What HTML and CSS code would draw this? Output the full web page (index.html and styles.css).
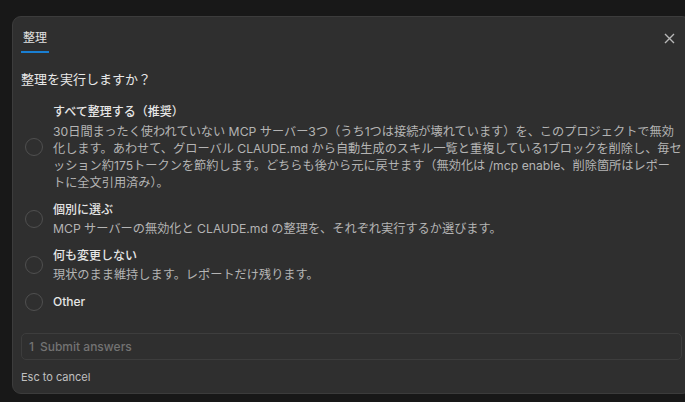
FILE: index.html
```html
<!DOCTYPE html>
<html lang="ja">
<head>
<meta charset="utf-8">
<link rel="stylesheet" href="styles.css">
</head>
<body>
<div class="panel">
  <div class="header">
    <div class="tab">整理</div>
    <button class="close" aria-label="close">
      <svg width="11" height="11" viewBox="0 0 11 11"><path d="M1 1L10 10M10 1L1 10" stroke="#b8b8b8" stroke-width="1.4" fill="none"/></svg>
    </button>
  </div>
  <div class="question">整理を実行しますか？</div>
  <div class="options">
    <div class="option">
      <span class="radio"></span>
      <div class="otext">
        <div class="otitle">すべて整理する（推奨）</div>
        <div class="odesc first">30日間まったく使われていない MCP サーバー3つ（うち1つは接続が壊れています）を、このプロジェクトで無効化します。あわせて、グローバル CLAUDE.md から自動生成のスキル一覧と重複している1ブロックを削除し、毎セッション約175トークンを節約します。どちらも後から元に戻せます（無効化は /mcp enable、削除箇所はレポートに全文引用済み）。</div>
      </div>
    </div>
    <div class="option">
      <span class="radio"></span>
      <div class="otext">
        <div class="otitle">個別に選ぶ</div>
        <div class="odesc">MCP サーバーの無効化と CLAUDE.md の整理を、それぞれ実行するか選びます。</div>
      </div>
    </div>
    <div class="option">
      <span class="radio"></span>
      <div class="otext">
        <div class="otitle">何も変更しない</div>
        <div class="odesc">現状のまま維持します。レポートだけ残ります。</div>
      </div>
    </div>
    <div class="option">
      <span class="radio"></span>
      <div class="otext">
        <div class="otitle">Other</div>
      </div>
    </div>
  </div>
  <div class="submit"><span class="num">1</span><span class="stext">Submit answers</span></div>
  <div class="esc">Esc to cancel</div>
</div>
</body>
</html>
```

FILE: styles.css
```css
html, body {
  margin: 0;
  padding: 0;
  background: #181818;
  overflow: hidden;
  width: 685px;
  height: 402px;
}
body {
  font-family: "Inter", "Noto Sans CJK JP", sans-serif;
  color: #e6e6e6;
}
.panel {
  box-sizing: border-box;
  margin: 16px 0 0 12px;
  width: 679px;
  height: 378px;
  background: #2f2f2f;
  border: 1px solid #3c3c3c;
  border-radius: 9px;
  padding: 0 8px;
}
.header {
  display: flex;
  justify-content: space-between;
  align-items: flex-start;
}
.tab {
  padding: 12px 2px 5px;
  font-size: 12px;
  line-height: 17px;
  color: #e2e2e2;
  border-bottom: 2px solid #1a7fd3;
}
.close {
  background: none;
  border: none;
  padding: 0;
  margin: 16px 7px 0 0;
  width: 11px;
  height: 11px;
  display: flex;
}
.question {
  margin-top: 17px;
  font-size: 13px;
  line-height: 18px;
  color: #e8e8e8;
}
.options {
  margin-top: 15px;
  display: flex;
  flex-direction: column;
  gap: 10px;
}
.option {
  display: flex;
  align-items: center;
}
.radio {
  flex: none;
  box-sizing: border-box;
  width: 18px;
  height: 18px;
  margin-left: 4px;
  margin-right: 10px;
  border: 1.3px solid #4f4f4f;
  border-radius: 50%;
}
.otext {
  flex: 1;
  min-width: 0;
}
.otitle {
  font-size: 12px;
  line-height: 18px;
  font-weight: 500;
  color: #e6e6e6;
}
.odesc {
  margin-top: 1px;
  font-size: 12.2px;
  line-height: 17px;
  color: #b4b4b4;
}
.odesc.first {
  margin-top: 2px;
}
.submit {
  margin-top: 22px;
  box-sizing: border-box;
  height: 27px;
  border: 1px solid #3d3d3d;
  border-radius: 5px;
  display: flex;
  align-items: center;
  padding-left: 7px;
  gap: 6px;
  font-size: 12px;
  font-weight: 500;
  color: #737373;
}
.esc {
  margin-top: 10px;
  font-size: 11px;
  line-height: 14px;
  color: #c0c0c0;
}
```
